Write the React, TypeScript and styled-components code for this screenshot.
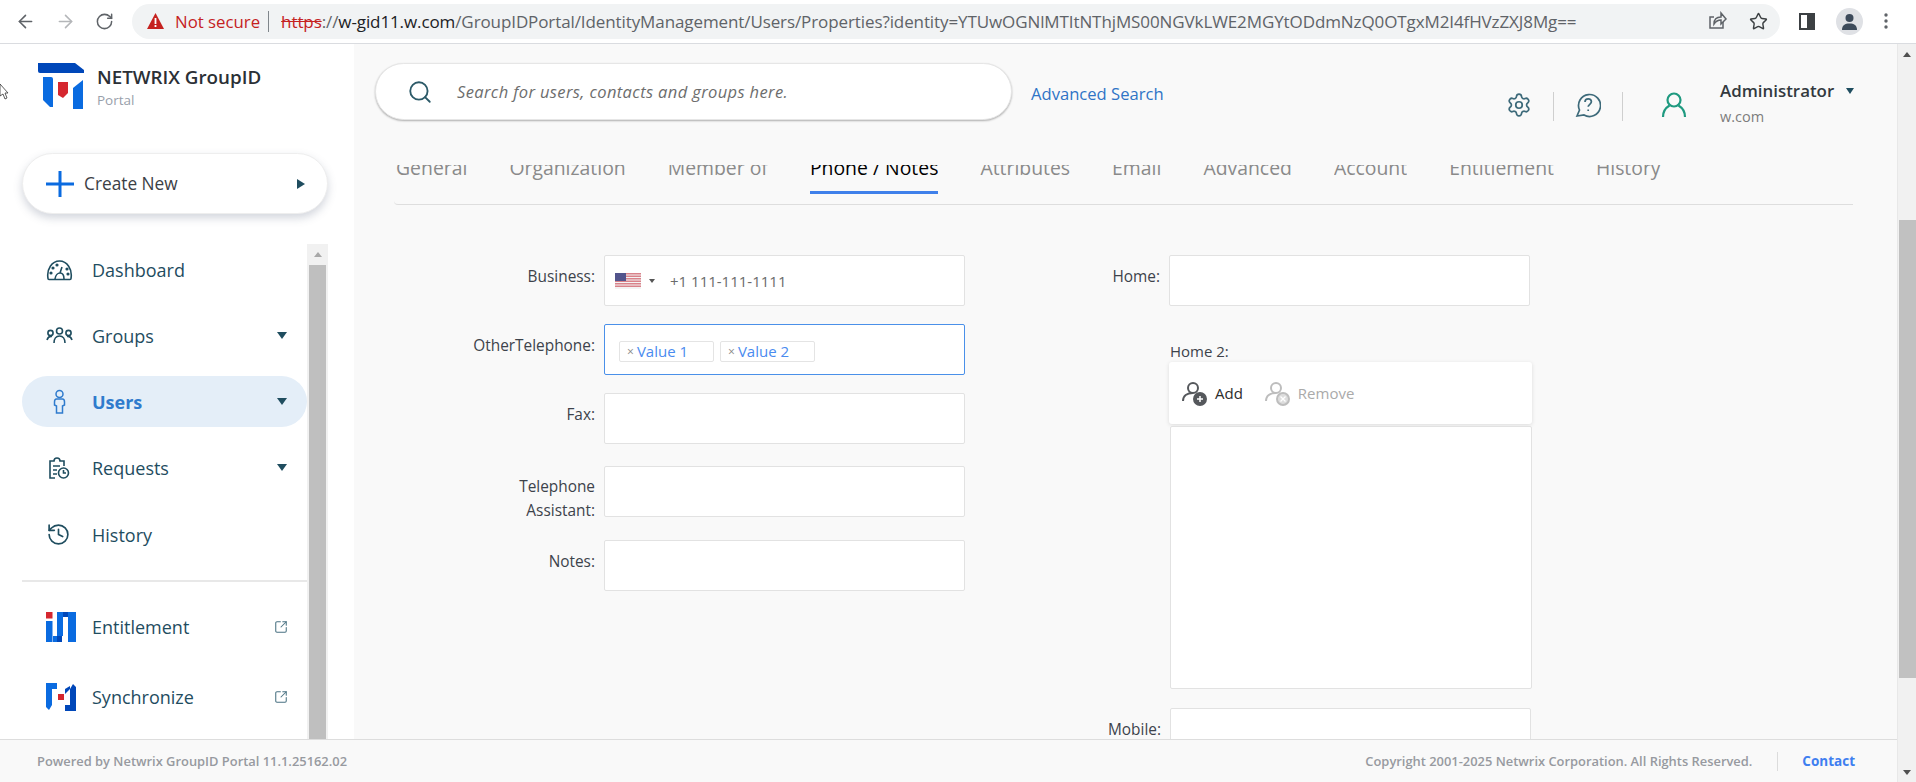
import React from "react";
import styled, { createGlobalStyle } from "styled-components";
import { ArrowLeft, ArrowRight, RotateCw, Search, Settings, Star, History, SquareArrowOutUpRight } from "lucide-react";

const GlobalStyle = createGlobalStyle`
    html, body {
        margin: 0;
        padding: 0;
        overflow: hidden;
        background: #ffffff;
    }
    * {
        box-sizing: border-box;
    }
`;

const Page = styled.div`
    width: 1916px;
    height: 782px;
    display: flex;
    flex-direction: column;
    overflow: hidden;
    font-family: "Open Sans", "Noto Sans", sans-serif;
    position: relative;
`;

/* browser bar */
const BrowserBar = styled.div`
    height: 44px;
    flex: none;
    display: flex;
    align-items: center;
    background: #ffffff;
    border-bottom: 1px solid #dadce0;
    padding-bottom: 1px;
`;

const NavIcon = styled.span<{ $dim?: boolean }>`
    display: flex;
    width: 40px;
    flex: none;
    color: ${(p) => (p.$dim ? "#b4b6b9" : "#5f6368")};
`;

const NavGroup = styled.div`
    width: 132px;
    flex: none;
    padding-left: 15px;
    display: flex;
    align-items: center;
`;

const AddressPill = styled.div`
    width: 1648px;
    height: 35px;
    border-radius: 18px;
    background: #f1f3f4;
    display: flex;
    align-items: center;
    padding-left: 15px;
    flex: none;
`;

const NotSecure = styled.span`
    color: #c5221f;
    font-size: 16.8px;
    margin-left: 11px;
`;

const AddressSep = styled.span`
    width: 1px;
    height: 21px;
    background: #80868b;
    margin: 0 12px 0 8px;
`;

const UrlText = styled.div`
    font-size: 17px;
    color: #5f6368;
    white-space: nowrap;
    letter-spacing: -0.1px;
    flex: 1;
`;

const UrlScheme = styled.span`
    color: #c5221f;
    text-decoration: line-through;
`;

const UrlHost = styled.span`
    color: #202124;
`;

const PillIcons = styled.div`
    display: flex;
    align-items: center;
    gap: 21px;
    padding-right: 12px;
    color: #5f6368;
`;

const BarActions = styled.div`
    display: flex;
    align-items: center;
    margin-left: 19px;
    gap: 21px;
    color: #5f6368;
`;

const Avatar = styled.span`
    width: 27px;
    height: 27px;
    border-radius: 50%;
    background: #dfe1e5;
    display: flex;
    align-items: center;
    justify-content: center;
`;

/* page under the browser bar */
const Viewport = styled.div`
    flex: 1;
    display: flex;
    min-height: 0;
`;

const PageArea = styled.div`
    flex: 1;
    display: flex;
    flex-direction: column;
    min-width: 0;
`;

const Columns = styled.div`
    flex: 1;
    display: flex;
    min-height: 0;
`;

const PageScroll = styled.div`
    width: 19px;
    flex: none;
    background: #f1f1f1;
    display: flex;
    flex-direction: column;
    align-items: center;
    padding-top: 8px;
    border-left: 1px solid #e8e8e8;
`;

const ScrollUp = styled.span`
    width: 0;
    height: 0;
    border-left: 4px solid transparent;
    border-right: 4px solid transparent;
    border-bottom: 5px solid #505050;
`;

const ScrollDown = styled.span`
    width: 0;
    height: 0;
    border-left: 4px solid transparent;
    border-right: 4px solid transparent;
    border-top: 5px solid #505050;
    margin-top: 92px;
`;

const PageThumb = styled.div`
    width: 17px;
    height: 458px;
    background: #c1c1c1;
    margin-top: 163px;
`;

/* sidebar */
const Sidebar = styled.aside`
    width: 354px;
    flex: none;
    background: #ffffff;
    display: flex;
    flex-direction: column;
    overflow: hidden;
`;

const Brand = styled.div`
    display: flex;
    align-items: flex-start;
    height: 109px;
    padding: 18px 0 0 38px;
    flex: none;
`;

const BrandText = styled.div`
    margin-left: 11px;
    padding-top: 3px;
`;

const BrandName = styled.div`
    font-size: 18.8px;
    font-weight: 600;
    color: #2b3036;
    line-height: 24px;
`;

const BrandSub = styled.div`
    font-size: 13.5px;
    color: #98a0ab;
    line-height: 18px;
    margin-top: 2px;
`;

const CreateButton = styled.div`
    flex: none;
    width: 306px;
    height: 61px;
    margin-left: 22px;
    border-radius: 31px;
    background: #ffffff;
    border: 1px solid #eeeeee;
    box-shadow: 0 4px 8px rgba(80, 90, 120, 0.25);
    display: flex;
    align-items: center;
    padding: 0 22px 0 23px;
    color: #3b4045;
    font-size: 17.3px;
`;

const CreateLabel = styled.span`
    flex: 1;
    margin-left: 10px;
`;

const CaretRight = styled.span`
    width: 0;
    height: 0;
    border-top: 5px solid transparent;
    border-bottom: 5px solid transparent;
    border-left: 8px solid #1f4d5f;
`;

const MenuFrame = styled.div`
    flex: 1;
    min-height: 0;
    margin: 30px 0 0 22px;
    width: 306px;
    display: flex;
`;

const MenuList = styled.nav`
    width: 285px;
    flex: none;
`;

const MenuItem = styled.div<{ $active?: boolean; $space?: number }>`
    height: 51px;
    margin-bottom: ${(p) => p.$space ?? 15}px;
    display: flex;
    align-items: center;
    border-radius: 26px;
    padding: 0 19px 0 24px;
    background: ${(p) => (p.$active ? "#e4eef8" : "transparent")};
    color: ${(p) => (p.$active ? "#2f7bcd" : "#1f4d5f")};
    font-size: 18px;
    font-weight: ${(p) => (p.$active ? 700 : 500)};
`;

const MenuIconSlot = styled.span`
    width: 46px;
    flex: none;
    display: flex;
`;

const MenuLabel = styled.span`
    flex: 1;
`;

const CaretDown = styled.span`
    width: 0;
    height: 0;
    border-left: 5px solid transparent;
    border-right: 5px solid transparent;
    border-top: 7px solid #1f4d5f;
    margin-right: 1px;
`;

const MenuDivider = styled.div`
    height: 2px;
    background: #e8e8e8;
    margin: 0 0 19px;
`;

const MenuScroll = styled.div`
    width: 21px;
    flex: none;
    background: #f1f1f1;
    display: flex;
    flex-direction: column;
    align-items: center;
    padding-top: 8px;
`;

const MenuScrollUp = styled.span`
    width: 0;
    height: 0;
    border-left: 4px solid transparent;
    border-right: 4px solid transparent;
    border-bottom: 5px solid #a8a8a8;
`;

const MenuThumb = styled.div`
    width: 17px;
    flex: 1;
    background: #bfbfbf;
    margin-top: 8px;
`;

/* main column */
const Main = styled.main`
    flex: 1;
    min-width: 0;
    background: #f9f9f9;
    display: flex;
    flex-direction: column;
    overflow: hidden;
`;

const Header = styled.header`
    flex: none;
    height: 121px;
    display: flex;
    padding: 19px 0 0 21px;
`;

const SearchBox = styled.div`
    width: 637px;
    height: 57px;
    border-radius: 29px;
    background: #ffffff;
    border: 1px solid #e6e6e6;
    box-shadow: 0 1px 2px rgba(0, 0, 0, 0.3);
    display: flex;
    align-items: center;
    padding-left: 31px;
    color: #2c5a68;
    flex: none;
`;

const SearchHint = styled.span`
    margin-left: 24px;
    font-size: 16.5px;
    font-style: italic;
    color: #6d6d6d;
    letter-spacing: 0.37px;
`;

const AdvancedLink = styled.a`
    margin: 20px 0 0 19px;
    color: #2f74c6;
    font-size: 16.6px;
    font-weight: 500;
    line-height: 22px;
    flex: none;
`;

const UserArea = styled.div`
    margin-left: auto;
    display: flex;
    align-items: flex-start;
    padding-top: 29px;
    padding-right: 32px;
`;

const HeadIcon = styled.span<{ $push?: number }>`
    display: flex;
    color: #3d6a7a;
    margin-left: ${(p) => p.$push ?? 0}px;
`;

const HeadSep = styled.span`
    width: 1px;
    height: 29px;
    background: #cfcfcf;
    margin: 0 21px;
`;

const UserBlock = styled.div`
    margin-left: 33px;
    margin-top: -12px;
    width: 145px;
`;

const UserName = styled.div`
    display: flex;
    align-items: center;
    font-size: 16.9px;
    font-weight: 600;
    color: #33393f;
    line-height: 22px;
`;

const UserCaret = styled.span`
    width: 0;
    height: 0;
    border-left: 4px solid transparent;
    border-right: 4px solid transparent;
    border-top: 6px solid #1f4d5f;
    margin-left: 12px;
`;

const UserDomain = styled.div`
    font-size: 14.5px;
    color: #7d7d7d;
    line-height: 20px;
    margin-top: 5px;
`;

const Content = styled.div`
    flex: 1;
    min-height: 0;
    padding: 0 44px 0 40px;
    overflow: hidden;
`;

const TabRow = styled.div`
    display: flex;
    gap: 42px;
    height: 40px;
    overflow: hidden;
    border-bottom: 1px solid #dedede;
    padding: 0 0 0 2px;
    border-bottom-left-radius: 4px;
`;

const Tab = styled.div<{ $active?: boolean }>`
    height: 29px;
    overflow: hidden;
    white-space: nowrap;
    color: ${(p) => (p.$active ? "#000000" : "#8a8a8a")};
    border-bottom: 3px solid ${(p) => (p.$active ? "#3f80ea" : "transparent")};
`;

const TabText = styled.span`
    display: block;
    font-size: 19.4px;
    line-height: 24px;
    margin-top: -9.5px;
`;

const FormGrid = styled.div`
    display: flex;
    padding-top: 50px;
    gap: 35px;
`;

const FormColumn = styled.div`
    display: flex;
    flex-direction: column;
`;

const Row = styled.div<{ $space?: number }>`
    display: flex;
    gap: 9px;
    height: 51px;
    flex: none;
    margin-bottom: ${(p) => p.$space ?? 18}px;
`;

const FieldLabel = styled.label<{ $width: number; $multi?: boolean }>`
    width: ${(p) => p.$width}px;
    flex: none;
    text-align: right;
    font-size: 15.4px;
    font-weight: 500;
    line-height: 24px;
    color: #3d434b;
    padding-top: ${(p) => (p.$multi ? 9 : 10)}px;
`;

const TextBox = styled.div<{ $focus?: boolean }>`
    width: 361px;
    height: 51px;
    background: #ffffff;
    border: 1px solid ${(p) => (p.$focus ? "#4a90e9" : "#e2e2e2")};
    border-radius: 2px;
    display: flex;
    align-items: center;
`;

const PhoneValue = styled.span`
    font-size: 15px;
    color: #6b6b6b;
    margin-left: 15px;
`;

const FlagCaret = styled.span`
    width: 0;
    height: 0;
    border-left: 3px solid transparent;
    border-right: 3px solid transparent;
    border-top: 4px solid #555555;
    margin-left: 8px;
`;

const FlagWrap = styled.span`
    display: flex;
    margin-left: 10px;
`;

const TagList = styled.div`
    display: flex;
    gap: 6px;
    margin: 3px 0 0 14px;
`;

const Tag = styled.span`
    width: 95px;
    height: 21px;
    display: flex;
    align-items: center;
    border: 1px solid #e4e4e4;
    border-radius: 2px;
    font-size: 15px;
    color: #4a8bef;
    padding-left: 7px;
    gap: 3px;
`;

const TagX = styled.span`
    color: #888888;
    font-size: 12px;
`;

const Home2Block = styled.div`
    margin-left: 170px;
    width: 362px;
    margin-top: 35px;
`;

const Home2Label = styled.div`
    font-size: 15px;
    font-weight: 500;
    color: #3d434b;
    line-height: 20px;
    margin-bottom: 1px;
`;

const ListToolbar = styled.div`
    height: 62px;
    width: 363px;
    margin-left: -1px;
    background: #ffffff;
    border-radius: 3px;
    box-shadow: 0 1px 4px rgba(0, 0, 0, 0.12);
    display: flex;
    align-items: center;
    padding-left: 13px;
`;

const ToolButton = styled.span<{ $off?: boolean }>`
    display: flex;
    align-items: center;
    gap: 7px;
    font-size: 15px;
    margin-right: 22px;
    color: ${(p) => (p.$off ? "#aaaaaa" : "#2c2c2c")};
`;

const ListBox = styled.div`
    height: 263px;
    margin-top: 2px;
    background: #ffffff;
    border: 1px solid #e2e2e2;
    border-radius: 2px;
    margin-bottom: 19px;
`;

/* footer */
const Footer = styled.footer`
    height: 43px;
    flex: none;
    background: #f9f9f9;
    border-top: 1px solid #dddddd;
    display: flex;
    align-items: center;
    padding: 0 42px 0 37px;
    font-size: 12.9px;
    font-weight: 600;
    color: #979aa0;
`;

const FooterRight = styled.div`
    margin-left: auto;
    display: flex;
    align-items: center;
`;

const FooterSep = styled.span`
    width: 1px;
    height: 19px;
    background: #dcdcdc;
    margin: 0 24px 0 25px;
`;

const ContactLink = styled.a`
    color: #3f7ff0;
    font-size: 13.5px;
    font-weight: 700;
`;

const CursorMark = styled.svg`
    position: absolute;
    left: 0;
    top: 84px;
`;

const LogoMark = () => (
    <svg width="48" height="48" viewBox="0 0 48 48">
        <path d="M0 1h37l9 7v3H2a2 2 0 0 1-2-2z" fill="#0047b9" />
        <path d="M5 15h8a2 2 0 0 1 2 2v28H12l-7-7z" fill="#0a6be0" />
        <path d="M20 20h10v11l-5 5-5-3z" fill="#d5272f" />
        <path d="M45 18v29H35V26z" fill="#0a6be0" />
    </svg>
);

const DashIcon = () => (
    <svg width="27" height="22" viewBox="0 0 27 22" fill="none" stroke="#1f4d5f" strokeWidth="1.6">
        <path d="M2 19.5C.4 10 6 2 13.5 2S26.6 10 25 19.5a1 1 0 0 1-1 1H3a1 1 0 0 1-1-1z" />
        <path d="M9 20c.5-4 3-6 5-6s4 2 4 6M14 14l2-6" />
        <circle cx="7" cy="9" r=".8" />
        <circle cx="11" cy="6" r=".8" />
        <circle cx="5" cy="14" r=".8" />
        <circle cx="21" cy="10" r=".8" />
        <circle cx="22" cy="15" r=".8" />
    </svg>
);

const GroupsIcon = () => (
    <svg width="27" height="20" viewBox="0 0 27 20" fill="none" stroke="#1f4d5f" strokeWidth="1.6">
        <circle cx="4.5" cy="7" r="2.6" />
        <circle cx="13.5" cy="5" r="3" />
        <circle cx="22.5" cy="7" r="2.6" />
        <path d="M1 14c1-3 3-4 5-3.5M8 17c0-4 2-7 5.500-7s5.500 3 5.500 7M26 14c-1-3-3-4-5-3.500" />
    </svg>
);

const UserIcon = () => (
    <svg width="27" height="26" viewBox="0 0 27 26" fill="none" stroke="#2f7bcd" strokeWidth="1.5">
        <circle cx="13.500" cy="5" r="3.500" />
        <path d="M10.500 10h6c1 0 2 1 2 3v3l-2 1v7h-6v-7l-2-1v-3c0-2 1-3 2-3z" />
    </svg>
);

const RequestIcon = () => (
    <svg width="27" height="24" viewBox="0 0 27 24" fill="none" stroke="#1f4d5f" strokeWidth="1.6">
        <path d="M9 22H4V5h4c0-2 1-3 3-3s3 1 3 3h4v5" />
        <path d="M7 10h7M7 14h4M7 18h4" />
        <circle cx="17.500" cy="17" r="5" />
        <path d="M17.500 14v3h2.500" />
    </svg>
);

const EntitlementIcon = () => (
    <svg width="30" height="30" viewBox="0 0 30 30">
        <rect x="0" y="0" width="6.500" height="6.500" fill="#d5272f" />
        <rect x="0" y="9" width="6.500" height="21" fill="#0a6be0" />
        <rect x="7" y="24" width="4" height="6" fill="#0a6be0" />
        <rect x="11" y="24" width="5" height="6" fill="#0047b9" />
        <rect x="11" y="0" width="6" height="24" fill="#0a6be0" />
        <rect x="17" y="0" width="5" height="5" fill="#0047b9" />
        <rect x="22" y="0" width="8" height="30" fill="#0a6be0" />
    </svg>
);

const SynchronizeIcon = () => (
    <svg width="30" height="28" viewBox="0 0 30 28">
        <path d="M0 0h11v6H6v16l-3 5-3-3z" fill="#0a6be0" />
        <path d="M30 28H19v-6h5V6l3-5 3 3z" fill="#0047b9" />
        <rect x="12" y="11" width="6" height="6" fill="#d5272f" />
        <path d="M19 6l5-3v3l-5 5z" fill="#0047b9" />
    </svg>
);

const AddPersonIcon = ({ off }: { off?: boolean }) => {
    const c = off ? "#bdbdbd" : "#55585c";
    return (
        <svg width="26" height="25" viewBox="0 0 26 25" fill="none" stroke={c} strokeWidth="2">
            <circle cx="11" cy="7" r="5" />
            <path d="M1 20c0-5 4-8 10-8" />
            <circle cx="18" cy="18" r="6" fill={off ? "#dddddd" : "#55585c"} stroke={c} />
            {off ? (
                <path d="M15.500 15.500l5 5M20.500 15.500l-5 5" stroke="#ffffff" strokeWidth="1.300" />
            ) : (
                <path d="M18 15v6M15 18h6" stroke="#ffffff" strokeWidth="1.500" />
            )}
        </svg>
    );
};

const UsFlag = () => (
    <svg width="26" height="16" viewBox="0 0 26 16">
        <rect width="26" height="16" fill="#f3f3f3" />
        {[0, 2.5, 5, 7.5, 10, 12.5].map((y) => (
            <rect key={y} y={y} width="26" height="1.500" fill="#d9828a" />
        ))}
        <rect width="11" height="8" fill="#52548c" />
    </svg>
);

const tabs = ["General", "Organization", "Member of", "Phone / Notes", "Attributes", "Email", "Advanced", "Account", "Entitlement", "History"];

export default function App() {
    return (
        <Page>
            <GlobalStyle />
            <BrowserBar>
                <NavGroup>
                    <NavIcon><ArrowLeft size={21} strokeWidth={1.8} /></NavIcon>
                    <NavIcon $dim><ArrowRight size={21} strokeWidth={1.8} /></NavIcon>
                    <NavIcon><RotateCw size={19} strokeWidth={1.9} /></NavIcon>
                </NavGroup>
                <AddressPill>
                    <svg width="17" height="16" viewBox="0 0 17 16">
                        <path d="M8.500 0L17 16H0z" fill="#c5221f" />
                        <rect x="7.600" y="5" width="1.800" height="6" fill="#fff" />
                        <rect x="7.600" y="12" width="1.800" height="2" fill="#fff" />
                    </svg>
                    <NotSecure>Not secure</NotSecure>
                    <AddressSep />
                    <UrlText>
                        <UrlScheme>https</UrlScheme>://<UrlHost>w-gid11.w.com</UrlHost>/GroupIDPortal/IdentityManagement/Users/Properties?identity=YTUwOGNlMTItNThjMS00NGVkLWE2MGYtODdmNzQ0OTgxM2I4fHVzZXJ8Mg==
                    </UrlText>
                    <PillIcons>
                        <svg width="20" height="20" viewBox="0 0 20 20" fill="none" stroke="#5f6368" strokeWidth="1.500">
                            <path d="M15 11v6H2V6h4" />
                            <path d="M6 13c0-5 3-7 7-7V2l5 6-5 5V9c-3 0-5 1-7 4z" />
                        </svg>
                        <Star size={19} strokeWidth={1.8} color="#3c4043" />
                    </PillIcons>
                </AddressPill>
                <BarActions>
                    <svg width="16" height="17" viewBox="0 0 16 17" fill="none" stroke="#3c4043" strokeWidth="2">
                        <rect x="1" y="1" width="14" height="15" />
                        <rect x="9" y="1" width="6" height="15" fill="#3c4043" />
                    </svg>
                    <Avatar>
                        <svg width="15" height="17" viewBox="0 0 15 17" fill="#3c4a5a">
                            <circle cx="7.500" cy="5" r="4" />
                            <path d="M0 17c0-5 3-6.500 7.500-6.500S15 12 15 17z" />
                        </svg>
                    </Avatar>
                    <svg width="4" height="18" viewBox="0 0 4 18" fill="#5f6368">
                        <circle cx="2" cy="3" r="1.700" />
                        <circle cx="2" cy="9" r="1.700" />
                        <circle cx="2" cy="15" r="1.700" />
                    </svg>
                </BarActions>
            </BrowserBar>
            <Viewport>
                <PageArea>
                    <Columns>
                        <Sidebar>
                            <Brand>
                                <LogoMark />
                                <BrandText>
                                    <BrandName>NETWRIX GroupID</BrandName>
                                    <BrandSub>Portal</BrandSub>
                                </BrandText>
                            </Brand>
                            <CreateButton>
                                <svg width="28" height="26" viewBox="0 0 28 26">
                                    <rect x="0" y="11.500" width="28" height="3" fill="#0a6be0" />
                                    <rect x="12.500" y="0" width="3" height="26" fill="#0a6be0" />
                                </svg>
                                <CreateLabel>Create New</CreateLabel>
                                <CaretRight />
                            </CreateButton>
                            <MenuFrame>
                                <MenuList>
                                    <MenuItem>
                                        <MenuIconSlot><DashIcon /></MenuIconSlot>
                                        <MenuLabel>Dashboard</MenuLabel>
                                    </MenuItem>
                                    <MenuItem>
                                        <MenuIconSlot><GroupsIcon /></MenuIconSlot>
                                        <MenuLabel>Groups</MenuLabel>
                                        <CaretDown />
                                    </MenuItem>
                                    <MenuItem $active>
                                        <MenuIconSlot><UserIcon /></MenuIconSlot>
                                        <MenuLabel>Users</MenuLabel>
                                        <CaretDown />
                                    </MenuItem>
                                    <MenuItem $space={16}>
                                        <MenuIconSlot><RequestIcon /></MenuIconSlot>
                                        <MenuLabel>Requests</MenuLabel>
                                        <CaretDown />
                                    </MenuItem>
                                    <MenuItem $space={20}>
                                        <MenuIconSlot><History size={25} strokeWidth={1.6} color="#1f4d5f" /></MenuIconSlot>
                                        <MenuLabel>History</MenuLabel>
                                    </MenuItem>
                                    <MenuDivider />
                                    <MenuItem $space={19}>
                                        <MenuIconSlot><EntitlementIcon /></MenuIconSlot>
                                        <MenuLabel>Entitlement</MenuLabel>
                                        <SquareArrowOutUpRight size={14} strokeWidth={1.8} color="#4a7282" />
                                    </MenuItem>
                                    <MenuItem>
                                        <MenuIconSlot><SynchronizeIcon /></MenuIconSlot>
                                        <MenuLabel>Synchronize</MenuLabel>
                                        <SquareArrowOutUpRight size={14} strokeWidth={1.8} color="#4a7282" />
                                    </MenuItem>
                                </MenuList>
                                <MenuScroll>
                                    <MenuScrollUp />
                                    <MenuThumb />
                                </MenuScroll>
                            </MenuFrame>
                        </Sidebar>
                        <Main>
                            <Header>
                                <SearchBox>
                                    <Search size={26} strokeWidth={1.7} />
                                    <SearchHint>Search for users, contacts and groups here.</SearchHint>
                                </SearchBox>
                                <AdvancedLink>Advanced Search</AdvancedLink>
                                <UserArea>
                                    <HeadIcon><Settings size={26} strokeWidth={1.6} /></HeadIcon>
                                    <HeadSep />
                                    <HeadIcon>
                                        <svg width="26" height="26" viewBox="0 0 26 26" fill="none" stroke="#3d6a7a" strokeWidth="1.700">
                                            <path d="M2 24l2.500-6A11 11 0 1 1 9 23z" />
                                            <path d="M10 10c0-2 1.500-3.200 3.200-3.200s3.200 1.200 3.200 3c0 2.400-3.200 2.600-3.200 5M13.200 17.500v1.500" />
                                        </svg>
                                    </HeadIcon>
                                    <HeadSep />
                                    <HeadIcon $push={17}>
                                        <svg width="26" height="26" viewBox="0 0 26 26" fill="none" stroke="#1f9a80" strokeWidth="2.200">
                                            <circle cx="13" cy="8" r="6.500" />
                                            <path d="M2 25c0-7 4-10 6.500-11.500M24 25c0-7-4-10-6.500-11.500" />
                                        </svg>
                                    </HeadIcon>
                                    <UserBlock>
                                        <UserName>Administrator<UserCaret /></UserName>
                                        <UserDomain>w.com</UserDomain>
                                    </UserBlock>
                                </UserArea>
                            </Header>
                            <Content>
                                <TabRow>
                                    {tabs.map((t) => (
                                        <Tab key={t} $active={t === "Phone / Notes"}>
                                            <TabText>{t}</TabText>
                                        </Tab>
                                    ))}
                                </TabRow>
                                <FormGrid>
                                    <FormColumn>
                                        <Row>
                                            <FieldLabel $width={201}>Business:</FieldLabel>
                                            <TextBox>
                                                <FlagWrap><UsFlag /></FlagWrap>
                                                <FlagCaret />
                                                <PhoneValue>+1 111-111-1111</PhoneValue>
                                            </TextBox>
                                        </Row>
                                        <Row>
                                            <FieldLabel $width={201}>OtherTelephone:</FieldLabel>
                                            <TextBox $focus>
                                                <TagList>
                                                    <Tag><TagX>×</TagX>Value 1</Tag>
                                                    <Tag><TagX>×</TagX>Value 2</Tag>
                                                </TagList>
                                            </TextBox>
                                        </Row>
                                        <Row $space={22}>
                                            <FieldLabel $width={201}>Fax:</FieldLabel>
                                            <TextBox />
                                        </Row>
                                        <Row $space={23}>
                                            <FieldLabel $width={201} $multi>Telephone<br />Assistant:</FieldLabel>
                                            <TextBox />
                                        </Row>
                                        <Row>
                                            <FieldLabel $width={201}>Notes:</FieldLabel>
                                            <TextBox />
                                        </Row>
                                    </FormColumn>
                                    <FormColumn>
                                        <Row $space={0}>
                                            <FieldLabel $width={160}>Home:</FieldLabel>
                                            <TextBox />
                                        </Row>
                                        <Home2Block>
                                            <Home2Label>Home 2:</Home2Label>
                                            <ListToolbar>
                                                <ToolButton><AddPersonIcon />Add</ToolButton>
                                                <ToolButton $off><AddPersonIcon off />Remove</ToolButton>
                                            </ListToolbar>
                                            <ListBox />
                                        </Home2Block>
                                        <Row $space={0}>
                                            <FieldLabel $width={161}>Mobile:</FieldLabel>
                                            <TextBox />
                                        </Row>
                                    </FormColumn>
                                </FormGrid>
                            </Content>
                        </Main>
                    </Columns>
                    <Footer>
                        Powered by Netwrix GroupID Portal 11.1.25162.02
                        <FooterRight>
                            Copyright 2001-2025 Netwrix Corporation. All Rights Reserved.
                            <FooterSep />
                            <ContactLink>Contact</ContactLink>
                        </FooterRight>
                    </Footer>
                </PageArea>
                <PageScroll>
                    <ScrollUp />
                    <PageThumb />
                    <ScrollDown />
                </PageScroll>
            </Viewport>
            <CursorMark width="10" height="16" viewBox="0 0 10 16">
                <path d="M0 0l8 9H5l2 5-2 1-2-5-3 2z" fill="#ffffff" stroke="#333333" strokeWidth="0.800" />
            </CursorMark>
        </Page>
    );
}
